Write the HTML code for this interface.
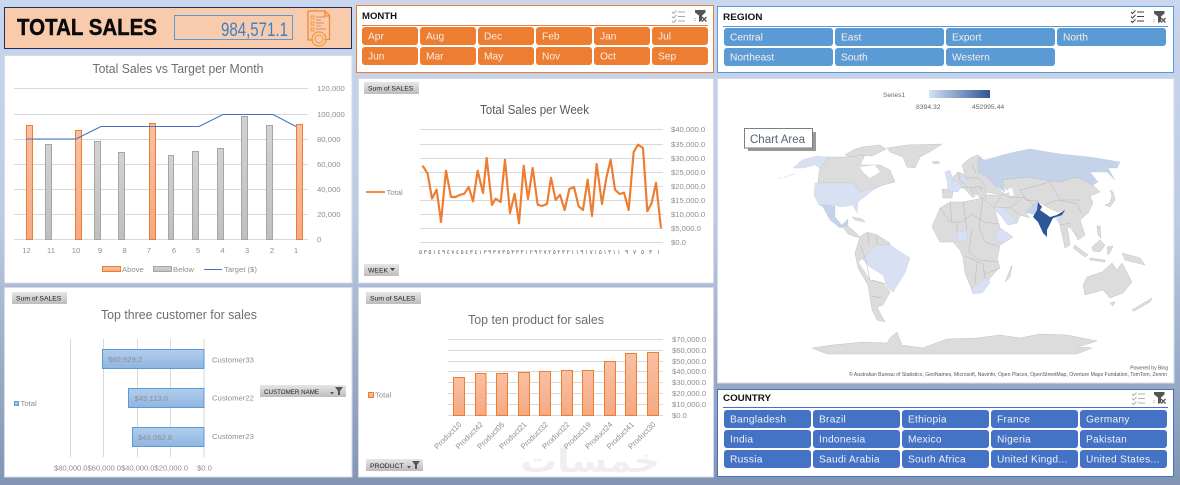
<!DOCTYPE html>
<html><head><meta charset="utf-8"><style>
html,body{margin:0;padding:0;width:1180px;height:485px;overflow:hidden;background:#a9bad4}
svg{display:block;filter:blur(.3px)}
text{font-family:"Liberation Sans","DejaVu Sans",sans-serif}
.ax{font-size:7.7px;fill:#8f8f8f}
.tt{font-size:12.5px;fill:#6e6e6e}
.btn{font-size:6.8px;fill:#222}
.st{font-size:8.8px;font-weight:bold;fill:#111}
.w{font-size:10.2px;fill:#f6eee8}
.m{fill:#dcdcdc;stroke:#b9b9b9;stroke-width:.4}
.l1{fill:#d7e1f3;stroke:#bcc8dc;stroke-width:.3}
.l2{fill:#c5d3ea;stroke:#aebdd6;stroke-width:.3}
</style></head><body>
<svg xmlns="http://www.w3.org/2000/svg" width="1180" height="485" viewBox="0 0 1180 485">
<defs>
<linearGradient id="bg" x1="0" y1="0" x2="0" y2="1"><stop offset="0" stop-color="#c8d7ee"/><stop offset=".45" stop-color="#bccbe3"/><stop offset=".7" stop-color="#a0b1cc"/><stop offset="1" stop-color="#8195b3"/></linearGradient>
<linearGradient id="gb" x1="0" y1="0" x2="0" y2="1"><stop offset="0" stop-color="#e6e6e6"/><stop offset="1" stop-color="#bdbdbd"/></linearGradient>
<linearGradient id="or" x1="0" y1="0" x2="0" y2="1"><stop offset="0" stop-color="#f8c0a2"/><stop offset="1" stop-color="#f6a983"/></linearGradient>
<linearGradient id="gr" x1="0" y1="0" x2="0" y2="1"><stop offset="0" stop-color="#d2d2d2"/><stop offset="1" stop-color="#bfbfbf"/></linearGradient>
<linearGradient id="bl" x1="0" y1="0" x2="0" y2="1"><stop offset="0" stop-color="#b2cdec"/><stop offset="1" stop-color="#8fb5e2"/></linearGradient>
<linearGradient id="leg" x1="0" y1="0" x2="1" y2="0"><stop offset="0" stop-color="#d5e0f3"/><stop offset="1" stop-color="#2f5597"/></linearGradient>
<g id="ms" fill="none" stroke-width="1">
<path d="M0 2l1.500 1.500 3-3M0 6.500l1.500 1.500 3-3M0 11l1.500 1.500 3-3M6 2h7M6 6.500h7M6 11h7"/>
</g>
<g id="fc">
<path d="M0 0h10.500v2.500l-3.500 3v5l-3 1.500v-6.500l-4-3z" fill="#555"/>
<path d="M7 7l4.500 4.500M11.500 7L7 11.500" stroke="#555" stroke-width="1.300" fill="none"/>
<path d="M0 8v4" stroke="#999" stroke-width="1" stroke-dasharray="1 1"/>
</g>
</defs>
<rect width="1180" height="485" fill="url(#bg)"/>

<!-- Total sales -->
<rect x="4.500" y="7.500" width="347" height="41" fill="#f8cbad" stroke="#1f2d5f" stroke-width="1"/>
<text x="17" y="35" font-size="23.500" font-weight="bold" fill="#0a0a0a" stroke="#0a0a0a" stroke-width=".45" textLength="140" lengthAdjust="spacingAndGlyphs">TOTAL SALES</text>
<rect x="174.500" y="15.500" width="118" height="24" fill="none" stroke="#5b9bd5"/>
<text x="221" y="36" font-size="19" fill="#3d80c6" textLength="67" lengthAdjust="spacingAndGlyphs">984,571.1</text>
<g fill="none" stroke="#f09a3e" stroke-width="1.300">
<path d="M308 11h17l4.500 4.500v24h-5M313 40h-5V11M325 11v5h4.500" stroke="#ee8a3a"/>
<path d="M311 16h3v3h-3zM311 22h3v3h-3zM311 28h3v3h-3z" stroke-width="1"/>
<path d="M316 17h9M316 23h8M316 29h10M316 20h5M316 26h5" stroke="#e98a55" stroke-width="1"/>
<circle cx="319" cy="39" r="7"/><circle cx="319" cy="39" r="4" stroke-width="1"/>
</g>

<!-- Chart 1 -->
<rect x="4.500" y="55.500" width="347.500" height="227.500" fill="#fff" stroke="#d5dbe6"/>
<text x="92.500" y="73" class="tt" textLength="171" lengthAdjust="spacingAndGlyphs">Total Sales vs Target per Month</text>
<g stroke="#d9d9d9" stroke-width="1">
<path d="M14 88.500h294M14 114.500h294M14 139.500h294M14 164.500h294M14 189.500h294M14 214.500h294M14 239.500h294"/>
</g>
<g class="ax">
<text x="317" y="91">120,000</text><text x="317" y="117">100,000</text><text x="317" y="142">80,000</text><text x="317" y="167">60,000</text><text x="317" y="192">40,000</text><text x="317" y="217">20,000</text><text x="317" y="242">0</text>
</g>
<g fill="url(#or)" stroke="#ed7d31" stroke-width="1">
<rect x="26.500" y="125.500" width="6" height="114"/><rect x="75.500" y="130.500" width="6" height="109"/><rect x="149.500" y="123.500" width="6" height="116"/><rect x="296.500" y="124.500" width="6" height="115"/>
</g>
<g fill="url(#gr)" stroke="#a6a6a6" stroke-width="1">
<rect x="45.500" y="144.500" width="6" height="95"/><rect x="94.500" y="141.500" width="6" height="98"/><rect x="118.500" y="152.500" width="6" height="87"/><rect x="168.500" y="155.500" width="5" height="84"/><rect x="192.500" y="151.500" width="6" height="88"/><rect x="217.500" y="148.500" width="6" height="91"/><rect x="241.500" y="116.500" width="6" height="123"/><rect x="266.500" y="125.500" width="6" height="114"/>
</g>
<polyline points="26,139 76,139 101,126.500 199,126.500 223,114.500 273,114.500 296,126.500" fill="none" stroke="#4472c4" stroke-width="1.100"/>
<g class="ax" text-anchor="middle">
<text x="26.500" y="253">12</text><text x="51" y="253">11</text><text x="76" y="253">10</text><text x="100" y="253">9</text><text x="124.500" y="253">8</text><text x="149" y="253">7</text><text x="174" y="253">6</text><text x="198" y="253">5</text><text x="222.500" y="253">4</text><text x="247" y="253">3</text><text x="272" y="253">2</text><text x="296" y="253">1</text>
</g>
<rect x="102.500" y="266.500" width="18" height="5" fill="url(#or)" stroke="#ed7d31"/>
<text x="122" y="272" class="ax">Above</text>
<rect x="153.500" y="266.500" width="18" height="5" fill="url(#gr)" stroke="#a6a6a6"/>
<text x="173" y="272" class="ax">Below</text>
<path d="M204 269.500h18" stroke="#4472c4" stroke-width="1"/>
<text x="224" y="272" class="ax">Target ($)</text>

<!-- Month slicer -->
<rect x="356.500" y="5.500" width="357" height="67" fill="#fff" stroke="#ed7d31"/>
<text x="362" y="19" class="st" textLength="35" lengthAdjust="spacingAndGlyphs">MONTH</text>
<path d="M362 25.500h346" stroke="#ed7d31"/>
<use href="#ms" x="672" y="10" stroke="#a8a8a8"/>
<use href="#fc" x="695" y="10"/>
<g fill="#ed7d31">
<rect x="362" y="27" width="56" height="18" rx="3"/><rect x="420" y="27" width="56" height="18" rx="3"/><rect x="478" y="27" width="56" height="18" rx="3"/><rect x="536" y="27" width="56" height="18" rx="3"/><rect x="594" y="27" width="56" height="18" rx="3"/><rect x="652" y="27" width="56" height="18" rx="3"/>
<rect x="362" y="47" width="56" height="18" rx="3"/><rect x="420" y="47" width="56" height="18" rx="3"/><rect x="478" y="47" width="56" height="18" rx="3"/><rect x="536" y="47" width="56" height="18" rx="3"/><rect x="594" y="47" width="56" height="18" rx="3"/><rect x="652" y="47" width="56" height="18" rx="3"/>
</g>
<g class="w">
<text x="368" y="39.500">Apr</text><text x="426" y="39.500">Aug</text><text x="484" y="39.500">Dec</text><text x="542" y="39.500">Feb</text><text x="600" y="39.500">Jan</text><text x="658" y="39.500">Jul</text>
<text x="368" y="59.500">Jun</text><text x="426" y="59.500">Mar</text><text x="484" y="59.500">May</text><text x="542" y="59.500">Nov</text><text x="600" y="59.500">Oct</text><text x="658" y="59.500">Sep</text>
</g>

<!-- Region slicer -->
<rect x="717.500" y="6.500" width="456" height="66" fill="#fff" stroke="#5b9bd5"/>
<text x="723" y="20" class="st" textLength="39.500" lengthAdjust="spacingAndGlyphs">REGION</text>
<path d="M723 26.500h445" stroke="#5b9bd5"/>
<use href="#ms" x="1131" y="10" stroke="#4a3a3a"/>
<use href="#fc" x="1154" y="11"/>
<g fill="#5b9bd5">
<rect x="724" y="28" width="109" height="18" rx="3"/><rect x="835" y="28" width="109" height="18" rx="3"/><rect x="946" y="28" width="109" height="18" rx="3"/><rect x="1057" y="28" width="109" height="18" rx="3"/>
<rect x="724" y="48" width="109" height="18" rx="3"/><rect x="835" y="48" width="109" height="18" rx="3"/><rect x="946" y="48" width="109" height="18" rx="3"/>
</g>
<g class="w">
<text x="730" y="40.500">Central</text><text x="841" y="40.500">East</text><text x="952" y="40.500">Export</text><text x="1063" y="40.500">North</text>
<text x="730" y="60.500">Northeast</text><text x="841" y="60.500">South</text><text x="952" y="60.500">Western</text>
</g>

<!-- Week chart -->
<rect x="358.500" y="78.500" width="355" height="204.500" fill="#fff" stroke="#d5dbe6"/>
<rect x="364" y="82" width="55" height="12" fill="url(#gb)"/>
<text x="368" y="90.500" class="btn">Sum of SALES</text>
<text x="480" y="114" class="tt" style="fill:#5a5a5a" textLength="109" lengthAdjust="spacingAndGlyphs">Total Sales per Week</text>
<path d="M420 129.500h243M420 144.500h243M420 158.500h243M420 172.500h243M420 186.500h243M420 200.500h243M420 214.500h243M420 228.500h243M420 242.500h243" stroke="#d9d9d9"/>
<g class="ax">
<text x="671" y="132">$40,000.0</text><text x="671" y="147">$35,000.0</text><text x="671" y="161">$30,000.0</text><text x="671" y="175">$25,000.0</text><text x="671" y="189">$20,000.0</text><text x="671" y="203">$15,000.0</text><text x="671" y="217">$10,000.0</text><text x="671" y="231">$5,000.0</text><text x="671" y="245">$0.0</text>
</g>
<g transform="translate(358,78) scale(.33333)">
<polyline fill="none" stroke="#ed7d31" stroke-width="6.500" stroke-linejoin="round" points="193,263 197,268 209,287 222,362 236,335 249,432 264,278 279,357 292,357 305,351 319,347 332,327 345,370 359,278 375,345 386,240 402,381 413,362 428,372 441,245 456,405 470,347 483,436 497,263 510,363 524,270 539,380 552,384 567,378 579,299 593,366 606,350 620,396 634,333 648,327 662,385 675,396 689,305 702,414 716,258 732,378 745,300 758,245 771,335 785,348 798,344 812,396 827,222 840,200 855,210 868,400 881,375 894,314 909,451"/>
</g>
<path d="M366 192h19" stroke="#ed7d31" stroke-width="1.800"/>
<text x="386.500" y="195" class="ax">Total</text>
<text x="419" y="254" font-size="6" fill="#666" style="font-family:'DejaVu Sans',sans-serif;direction:ltr;unicode-bidi:bidi-override" textLength="241">٥٣٥١٤٩٤٧٤٥٤٣٤١٣٩٣٧٣٥٣٣٣١٢٩٢٧٢٥٢٣٢١١٩١٧١٥١٣١١ ٩ ٧ ٥ ٣ ١</text>
<rect x="364" y="264" width="35" height="12" fill="url(#gb)"/>
<text x="368" y="272.500" class="btn">WEEK</text>
<path d="M390 268h5l-2.500 3z" fill="#444"/>

<!-- Map -->
<rect x="717.500" y="78.500" width="456.500" height="304.500" fill="#fff" stroke="#d5dbe6"/>
<text x="883" y="97" font-size="6.500" fill="#666">Series1</text>
<rect x="929" y="90" width="61" height="8" fill="url(#leg)"/>
<text x="916" y="109" font-size="6.800" fill="#666">8394.32</text>
<text x="972" y="109" font-size="6.800" fill="#666">452995.44</text>

<!-- land -->
<polygon class="l1" points="793,168 802,160 817,156 829,157 820,168 815,165 803,168"/>
<path d="M779 178h3M784 177.500l11-4" stroke="#ccc" stroke-width=".6" fill="none"/>
<polygon class="m" points="829,157 847,157 866,153 860,165 880,165 890,170 895,182 883,185 867,192 860,192 853,183 818,183 819,173 820,168"/>
<polygon fill="#fff" points="860,167 875,165 880,172 870,178 863,172"/>
<polygon class="m" points="845,155 853,150 862,147 880,145 886,149 872,156 860,155 852,157"/>
<polygon class="m" points="887,148 907,145 942,144 933,150 920,157 915,168 907,167 903,157 890,152"/>
<polygon class="m" points="932,162 938,161 940,163 934,164"/>
<polygon class="l1" points="815,183 853,183 860,192 877,187 867,195 858,202 857,213 853,205 840,207 835,205 827,205 818,203 814,195"/>
<polygon class="l2" points="818,204 835,206 835,217 842,225 848,219 848,225 840,228 830,220 823,207"/>
<polygon class="m" points="842,226 848,226 855,232 860,237 856,237 848,234"/>
<polygon class="m" points="852,217 862,219 865,222 855,220"/>
<polygon class="m" points="860,237 867,232 877,235 890,243 890,246 877,246 863,258 858,262 870,280 883,283 890,292 883,305 877,307 885,322 877,320 872,310 868,285 858,268 855,253"/>
<polygon class="l1" points="863,258 877,245 890,245 910,258 905,273 893,292 887,287 883,275 870,267 863,260"/>
<polygon class="m" points="932,227 940,208 950,202 963,202 983,198 993,203 1000,228 1013,237 1000,245 997,260 1000,267 990,278 983,292 973,293 965,273 963,257 960,250 953,242 940,242"/>
<polygon class="l1" points="972,288 980,283 988,278 990,283 982,293 973,294"/>
<polygon class="l1" points="957,232 967,230 967,240 957,242"/>
<polygon class="l1" points="995,232 1002,229 1013,237 1003,243 997,242"/>
<polygon class="m" points="1005,282 1012,265 1010,277"/>
<polygon class="m" points="950,180 958,172 965,175 962,165 970,158 978,155 982,158 978,172 987,177 995,185 1002,192 1005,195 985,192 975,195 970,188 960,188"/>
<polygon class="m" points="963,187 970,188 975,197 972,197"/>
<polygon class="m" points="975,188 985,188 987,197 980,198"/>
<polygon class="m" points="942,189 953,190 952,198 943,198"/>
<polygon class="l1" points="945,172 950,170 953,180 947,182"/>
<polygon class="l1" points="947,183 955,180 962,185 958,192 948,191"/>
<polygon class="l1" points="959,178 965,176 967,182 962,183"/>
<polygon class="l2" points="978,158 985,160 1010,153 1030,149 1060,154 1090,157 1120,162 1117,168 1108,168 1115,180 1107,172 1090,172 1098,182 1093,185 1077,177 1060,182 1043,180 1027,177 1002,180 1005,192 995,185 987,177 978,172"/>
<polygon class="m" points="1002,180 1027,177 1043,180 1060,182 1077,177 1093,185 1100,192 1090,196 1093,203 1088,213 1080,220 1085,235 1078,240 1072,228 1067,225 1070,245 1065,248 1060,225 1057,218 1065,210 1057,212 1043,205 1038,201 1025,212 1030,218 1020,215 1010,208 993,207 985,200 985,195 1003,195 1010,192 1005,188"/>
<polygon fill="#fff" points="1008,189 1012,188 1014,195 1010,196"/>
<polygon class="m" points="993,207 1002,217 1008,225 1017,223 1020,215 1010,208"/>
<polygon class="l1" points="993,207 1005,208 1017,223 1008,225 1002,217"/>
<polygon class="l2" points="1025,212 1033,205 1038,201 1040,208 1035,215"/>
<polygon fill="#2d5597" points="1038,202 1042,207 1040,210 1050,217 1057,215 1065,210 1062,215 1057,217 1053,218 1047,230 1047,237 1043,233 1038,222 1033,217 1037,210"/>
<polygon class="l1" points="1056,217 1060,216 1060,221 1057,221"/>
<polygon class="m" points="1105,205 1110,203 1112,195 1110,190 1113,192 1115,200 1110,207"/>
<polygon class="m" points="1097,226 1100,226 1101,238 1098,235"/>
<polygon class="m" points="1092,247 1100,240 1105,245 1100,252 1093,251"/>
<polygon class="m" points="1075,245 1088,255 1085,257 1073,248"/>
<polygon class="m" points="1090,258 1105,260 1105,262 1090,260"/>
<polygon class="m" points="1107,247 1113,246 1110,253 1108,255"/>
<polygon class="m" points="1122,253 1140,258 1145,265 1125,260"/>
<polygon class="m" points="1083,285 1087,277 1102,272 1112,263 1117,270 1122,263 1132,282 1123,293 1110,298 1103,290 1085,295"/>
<polygon class="m" points="1110,303 1115,302 1113,306"/>
<polygon class="m" points="1132,310 1152,298 1150,302 1134,311"/>
<polygon class="m" points="812,348 827,354 1077,354 1092,348 1078,347 1097,341 1067,335 1040,334 1020,338 1000,335 977,338 947,339 923,348 902,345 897,332 890,338 887,343 863,342 833,345"/>
<g fill="none" stroke="#b5b5b5" stroke-width=".5">
<path d="M940 208l10 14 12 0 10-8 12 8 14 2M950 202l2 20M963 202l4 28M983 198l-4 30 6 14 12 4M957 222l0 10M972 228l-3 24 10 8 20 2M965 256l18 8 2 14M977 262l-2 22M1000 268l-15 6"/>
<path d="M860 245l6 15 4 20M868 233l1 12M877 235l0 10M872 280l14 4M872 296l10 2"/>
<path d="M1002 192l6 5 18 1 8 8M1020 190l6 10 12 1M1020 190l30-8 10 18 20 0M1045 205l12-5 20 4 5 10M1060 225l10-2M1068 226l10 10M1010 208l10-8M1000 198l-6 8"/>
<path d="M958 172l2 8 8 8M965 178l14 0 6 8M970 188l10-2 2 6M972 165l4 8"/>
</g>

<!-- Tooltip -->
<rect x="748" y="132" width="68" height="19" fill="#999"/>
<rect x="744.500" y="128.500" width="68" height="19.500" fill="#fff" stroke="#7f7f7f"/>
<text x="750" y="143" font-size="11.500" fill="#596573" textLength="55" lengthAdjust="spacingAndGlyphs">Chart Area</text>
<text x="1168" y="369.500" font-size="5" fill="#555" text-anchor="end">Powered by Bing</text>
<text x="849" y="376" font-size="5" fill="#555" textLength="318" lengthAdjust="spacingAndGlyphs">© Australian Bureau of Statistics, GeoNames, Microsoft, Navinfo, Open Places, OpenStreetMap, Overture Maps Fundation, TomTom, Zenrin</text>

<!-- Top three -->
<rect x="4.500" y="287.500" width="347.500" height="189.500" fill="#fff" stroke="#d5dbe6"/>
<rect x="12" y="292" width="55" height="12" fill="url(#gb)"/>
<text x="16" y="300.500" class="btn">Sum of SALES</text>
<text x="101" y="319" class="tt" textLength="156" lengthAdjust="spacingAndGlyphs">Top three customer for sales</text>
<path d="M70.500 339v118M103.500 339v118M137.500 339v118M170.500 339v118M204 339v118" stroke="#d9d9d9"/>
<g fill="url(#bl)" stroke="#5b9bd5" stroke-width="1">
<rect x="102.500" y="349.500" width="101.500" height="19"/><rect x="128.500" y="388.500" width="75.500" height="19"/><rect x="132.500" y="427.500" width="71.500" height="19"/>
</g>
<text x="108" y="362" class="ax">$60,929.2</text><text x="134.500" y="401" class="ax">$45,113.0</text><text x="138" y="440" class="ax">$43,062.8</text>
<text x="212" y="362.500" class="ax">Customer33</text><text x="212" y="400.500" class="ax">Customer22</text><text x="212" y="439" class="ax">Customer23</text>
<text x="54" y="470.500" class="ax" textLength="134">$80,000.0$60,000.0$40,000.0$20,000.0</text><text x="197" y="470.500" class="ax">$0.0</text>
<rect x="14.500" y="401.500" width="4" height="4" fill="url(#bl)" stroke="#5b9bd5"/>
<text x="20.500" y="406" class="ax">Total</text>
<rect x="260" y="385" width="86" height="12" fill="url(#gb)"/>
<text x="264" y="394" class="btn" textLength="55" lengthAdjust="spacingAndGlyphs">CUSTOMER NAME</text>
<path d="M330 392h4l-2 2.500zM335 387h8l-3 4v4h-2v-4z" fill="#555"/>

<!-- Top ten -->
<rect x="358.500" y="287.500" width="355" height="189.500" fill="#fff" stroke="#d5dbe6"/>
<rect x="366" y="292" width="55" height="12" fill="url(#gb)"/>
<text x="370" y="300.500" class="btn">Sum of SALES</text>
<text x="468" y="324" class="tt" textLength="136" lengthAdjust="spacingAndGlyphs">Top ten product for sales</text>
<path d="M448 339.500h215M448 350.500h215M448 361.500h215M448 371.500h215M448 382.500h215M448 393.500h215M448 404.500h215M448 415.500h215" stroke="#d9d9d9"/>
<g fill="url(#or)" stroke="#ed7d31" stroke-width="1">
<rect x="453.500" y="377.500" width="11" height="38"/><rect x="475.500" y="373.500" width="10.500" height="42"/><rect x="496.500" y="373.500" width="11" height="42"/><rect x="518.500" y="372.500" width="11" height="43"/><rect x="539.500" y="371.500" width="11" height="44"/><rect x="561.500" y="370.500" width="11" height="45"/><rect x="582.500" y="370.500" width="11" height="45"/><rect x="604.500" y="361.500" width="11" height="54"/><rect x="625.500" y="353.500" width="11" height="62"/><rect x="647.500" y="352.500" width="11" height="63"/>
</g>
<g class="ax">
<text x="672" y="342">$70,000.0</text><text x="672" y="353">$60,000.0</text><text x="672" y="364">$50,000.0</text><text x="672" y="374">$40,000.0</text><text x="672" y="385">$30,000.0</text><text x="672" y="396">$20,000.0</text><text x="672" y="407">$10,000.0</text><text x="672" y="418">$0.0</text>
</g>
<text x="520" y="472" font-size="32" font-weight="bold" fill="#efefef" style="font-family:'DejaVu Sans',sans-serif" textLength="140" lengthAdjust="spacingAndGlyphs">خمسات</text>
<g class="ax" text-anchor="end">
<text transform="translate(462,425) rotate(-45)">Product10</text>
<text transform="translate(483.500,425) rotate(-45)">Product42</text>
<text transform="translate(505,425) rotate(-45)">Product05</text>
<text transform="translate(527,425) rotate(-45)">Product21</text>
<text transform="translate(548.500,425) rotate(-45)">Product32</text>
<text transform="translate(570,425) rotate(-45)">Product22</text>
<text transform="translate(591.500,425) rotate(-45)">Product19</text>
<text transform="translate(613,425) rotate(-45)">Product24</text>
<text transform="translate(634.500,425) rotate(-45)">Product41</text>
<text transform="translate(656,425) rotate(-45)">Product30</text>
</g>
<rect x="368.500" y="392.500" width="5" height="5" fill="url(#or)" stroke="#ed7d31"/>
<text x="375" y="397.500" class="ax">Total</text>
<rect x="366" y="459" width="57" height="12" fill="url(#gb)"/>
<text x="370" y="468" class="btn">PRODUCT</text>
<path d="M407 466h4l-2 2.500zM412 461h8l-3 4v4h-2v-4z" fill="#555"/>

<!-- Country -->
<rect x="717.500" y="389.500" width="456" height="87" fill="#fff" stroke="#4472c4"/>
<text x="723" y="401" class="st" textLength="48" lengthAdjust="spacingAndGlyphs">COUNTRY</text>
<path d="M723 407.500h445" stroke="#4472c4"/>
<use href="#ms" x="1132" y="392" stroke="#b0b0b0"/>
<use href="#fc" x="1154" y="392"/>
<g fill="#4472c4">
<rect x="724" y="410" width="87" height="18" rx="3"/><rect x="813" y="410" width="87" height="18" rx="3"/><rect x="902" y="410" width="87" height="18" rx="3"/><rect x="991" y="410" width="87" height="18" rx="3"/><rect x="1080" y="410" width="87" height="18" rx="3"/>
<rect x="724" y="430" width="87" height="18" rx="3"/><rect x="813" y="430" width="87" height="18" rx="3"/><rect x="902" y="430" width="87" height="18" rx="3"/><rect x="991" y="430" width="87" height="18" rx="3"/><rect x="1080" y="430" width="87" height="18" rx="3"/>
<rect x="724" y="450" width="87" height="18" rx="3"/><rect x="813" y="450" width="87" height="18" rx="3"/><rect x="902" y="450" width="87" height="18" rx="3"/><rect x="991" y="450" width="87" height="18" rx="3"/><rect x="1080" y="450" width="87" height="18" rx="3"/>
</g>
<g class="w" style="letter-spacing:.25px;fill:#eef1f8">
<text x="730" y="422.500">Bangladesh</text><text x="819" y="422.500">Brazil</text><text x="908" y="422.500">Ethiopia</text><text x="997" y="422.500">France</text><text x="1086" y="422.500">Germany</text>
<text x="730" y="442.500">India</text><text x="819" y="442.500">Indonesia</text><text x="908" y="442.500">Mexico</text><text x="997" y="442.500">Nigeria</text><text x="1086" y="442.500">Pakistan</text>
<text x="730" y="462.500">Russia</text><text x="819" y="462.500">Saudi Arabia</text><text x="908" y="462.500">South Africa</text><text x="997" y="462.500">United Kingd...</text><text x="1086" y="462.500">United States...</text>
</g>
</svg>
</body></html>
